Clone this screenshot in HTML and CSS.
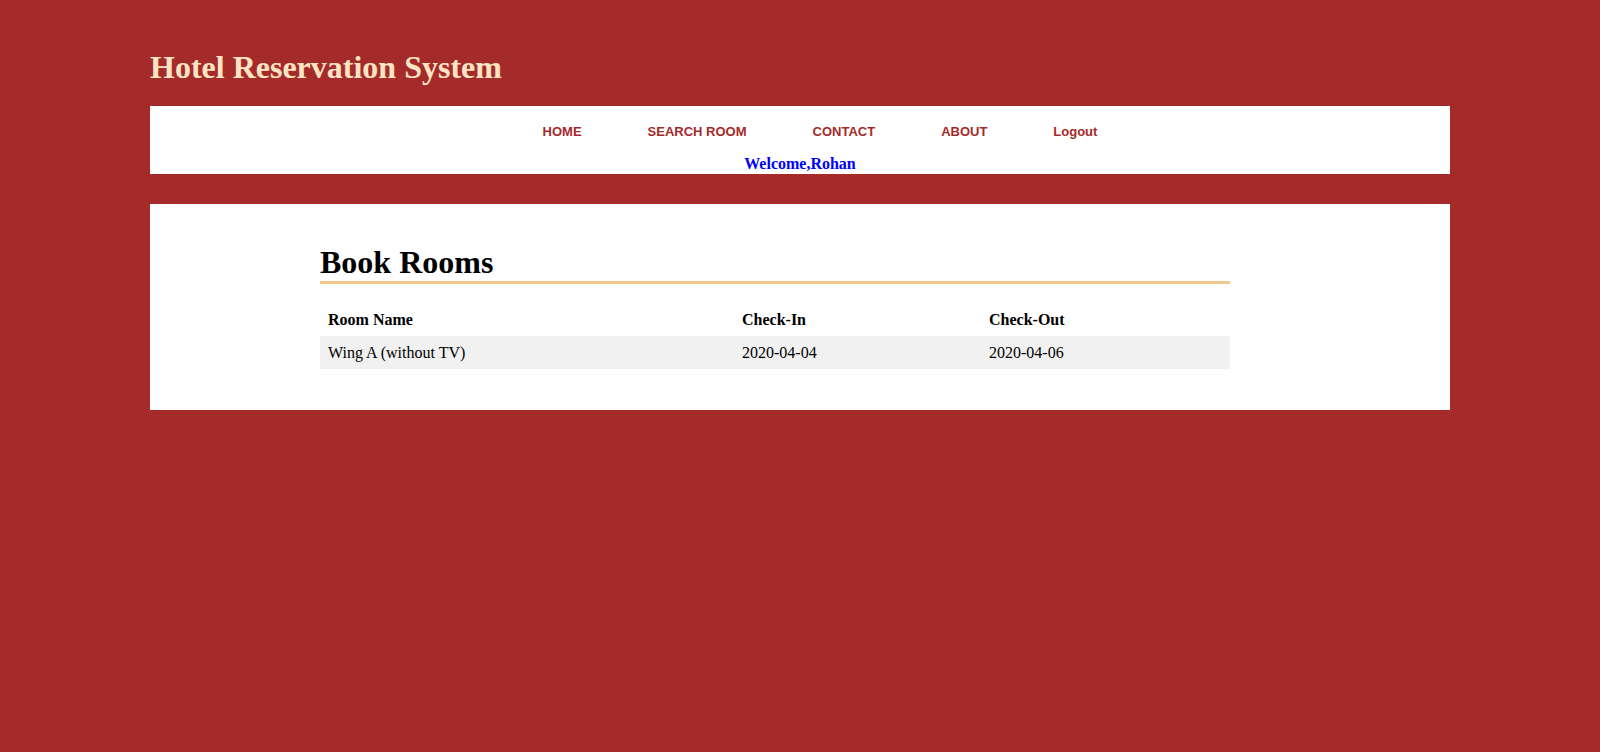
FILE: index.html
```html
<!DOCTYPE html>
<html>
<head>
<meta charset="utf-8">
<title>Hotel Reservation System</title>
<link rel="stylesheet" href="styles.css">
</head>
<body>
<div class="page">
  <h1 class="site-title">Hotel Reservation System</h1>
  <nav class="navbar">
    <ul class="nav-list">
      <li><a href="#">HOME</a></li>
      <li><a href="#">SEARCH ROOM</a></li>
      <li><a href="#">CONTACT</a></li>
      <li><a href="#">ABOUT</a></li>
      <li><a href="#">Logout</a></li>
    </ul>
    <div class="welcome">Welcome,Rohan</div>
  </nav>
  <main class="content">
    <div class="inner">
      <h2 class="section-title">Book Rooms</h2>
      <table class="rooms">
        <thead>
          <tr><th class="c1">Room Name</th><th class="c2">Check-In</th><th class="c3">Check-Out</th></tr>
        </thead>
        <tbody>
          <tr><td>Wing A (without TV)</td><td>2020-04-04</td><td>2020-04-06</td></tr>
        </tbody>
      </table>
    </div>
  </main>
</div>
</body>
</html>
```
FILE: styles.css
```css
html, body {
  margin: 0;
  padding: 0;
  background: #a52a2a;
  font-family: "Liberation Serif", "Times New Roman", serif;
}
.page {
  width: 1300px;
  margin: 0 auto;
}
.site-title {
  margin: 0;
  padding: 49px 0 20px 0;
  font-size: 32px;
  line-height: 37px;
  font-weight: bold;
  color: #ffe4c4;
}
.navbar {
  background: #fff;
  height: 68px;
  padding-top: 18px;
  box-sizing: border-box;
}
.nav-list {
  margin: 0;
  padding: 0 0 0 40px;
  list-style: none;
  display: flex;
  justify-content: center;
  height: 15px;
}
.nav-list li {
  padding: 0 33px;
}
.nav-list a {
  font-family: "Liberation Sans", Arial, sans-serif;
  font-size: 13px;
  line-height: 15px;
  font-weight: bold;
  color: #a52a2a;
  text-decoration: none;
  display: block;
}
.welcome {
  margin-top: 16px;
  text-align: center;
  font-size: 16px;
  line-height: 18px;
  font-weight: bold;
  color: #0000ff;
}
.content {
  display: block;
  background: #fff;
  margin-top: 30px;
  padding: 40px 0 41px 170px;
}
.inner {
  width: 910px;
}
.section-title {
  margin: 0 0 19px 0;
  font-size: 32px;
  line-height: 37px;
  padding-bottom: 0;
  border-bottom: 3px solid #f0ca8d;
  color: #000;
}
.rooms {
  width: 910px;
  border-collapse: collapse;
  font-size: 16px;
  color: #000;
}
.rooms th, .rooms td {
  text-align: left;
  padding: 8px;
  line-height: 17px;
}
.rooms th {
  font-weight: bold;
}
.rooms tbody tr {
  background: #f1f1f1;
}
.c1 { width: 398px; }
.c2 { width: 231px; }
.c3 { width: 233px; }
```
